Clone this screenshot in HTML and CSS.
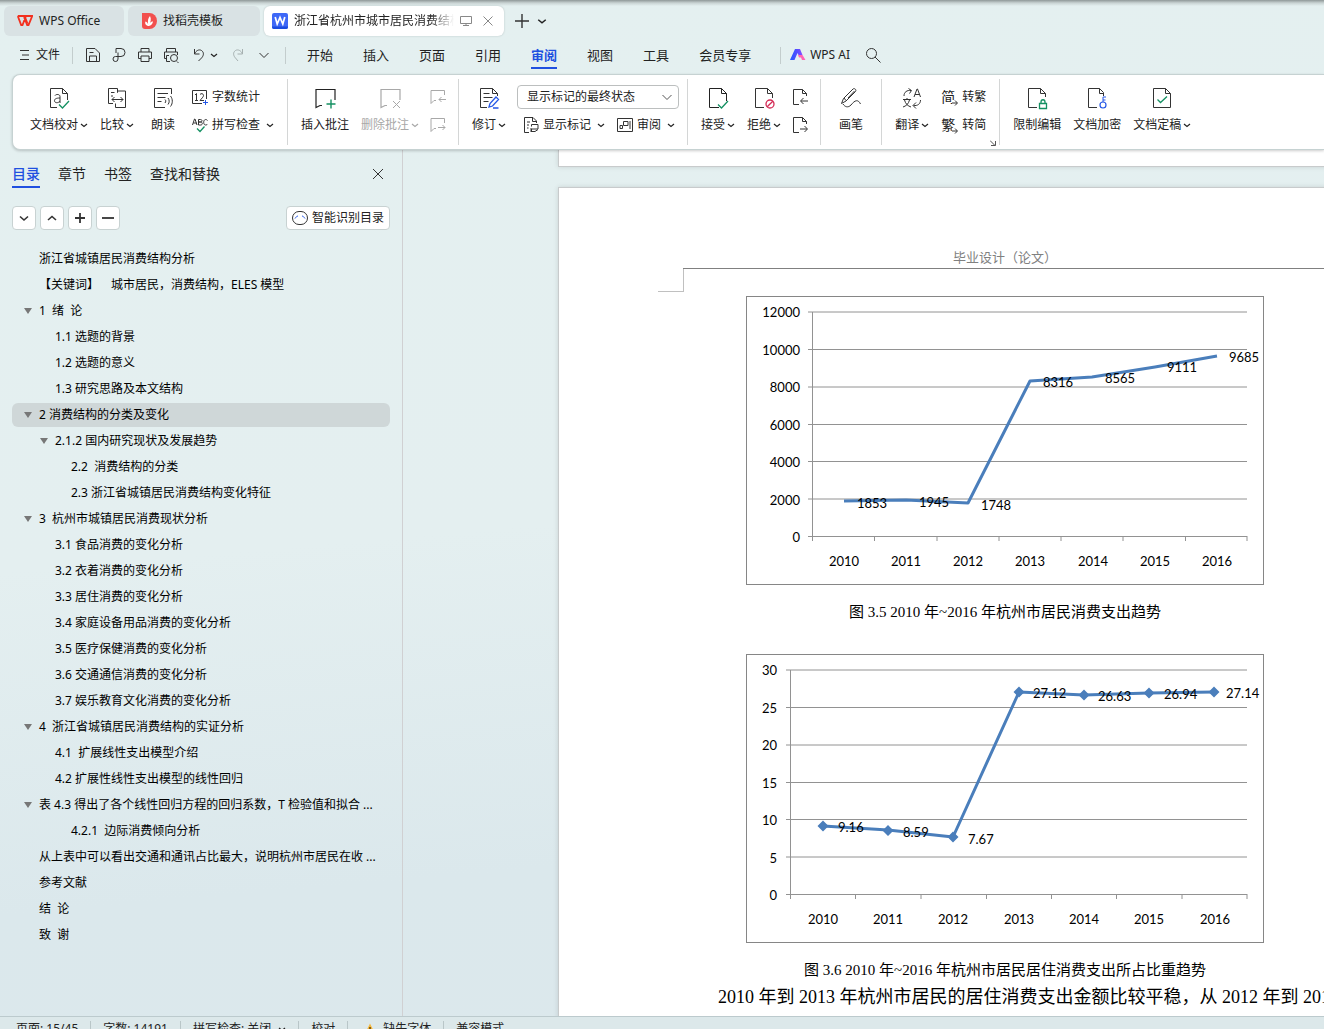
FILE: index.html
```
<!doctype html>
<html lang="zh-CN">
<head>
	<meta charset="UTF-8">
	<title>WPS Office</title>
	<meta name="viewport" content="width=device-width, initial-scale=1.0">
	<link rel="stylesheet" href="styles.css">
</head>
<body>
	<svg class="defs" width="0" height="0">
		<symbol id="down" viewBox="0 0 8 8"><path d="M1 3L4 5.500 7 3" fill="none" stroke="currentColor" stroke-width="1.200"/></symbol>
		<symbol id="doc" viewBox="0 0 24 24"><path d="M13 21.500H3.500v-19h12l5 5V15M15.500 2.500v5h5" fill="none" stroke="currentColor"/></symbol>
		<symbol id="note" viewBox="0 0 24 24"><path d="M9 19.500H7l-4 2V3.500h19V14" fill="none" stroke="currentColor" stroke-width="1.200"/></symbol>
	</svg>

	<header class="tabs">
		<button class="tab">
			<svg width="16" height="16" viewBox="0 0 16 16"><path d="M.8 3h6.700l3 7.500M.8 3l3.400 9h1.300L9 3h6.200l-3.700 9h-1.300L7 4" fill="none" stroke="#f2301f" stroke-width="1.800"/></svg>
			<span>WPS Office</span>
		</button>
		<button class="tab tab-tpl">
			<svg width="16" height="16" viewBox="0 0 16 16"><path d="M1 0h7.500a7.500 8 0 0 1 0 16H4a3 3 0 0 1-3-3z" fill="#f2504e"/><path d="M7 13c-3-1-3-3-2.600-4.500C6 9 7 10 7.200 12 6.500 8 7 5 9 3c1.500 3 .8 6-1 9 .6-2 1.800-3.500 3.800-3.800.3 2.600-1.800 4.600-4.800 4.800z" fill="#fff"/></svg>
			<span>找稻壳模板</span>
		</button>
		<button class="tab tab-on">
			<svg width="16" height="16" viewBox="0 0 16 16"><rect width="16" height="16" rx="2" fill="#3e68f7"/><path d="M0 13.500h16V14a2 2 0 0 1-2 2H2a2 2 0 0 1-2-2z" fill="#1a4be0"/><path d="M3.200 4l2 7L8 4.500l2.800 6.500 2-7" fill="none" stroke="#fff" stroke-width="1.700"/></svg>
			<span class="tab-name">浙江省杭州市城市居民消费结构</span>
			<svg width="12" height="12" viewBox="0 0 12 12"><path d="M.5 1.500h11v7H.5zM3 10.500h6M6 8.500v2" fill="none" stroke="#888"/></svg>
			<svg class="tab-x" width="12" height="12" viewBox="0 0 12 12"><path d="M1.500 1.500l9 9m0-9l-9 9" stroke="#888"/></svg>
		</button>
		<button class="plain add" aria-label="新建"><svg width="14" height="14" viewBox="0 0 14 14"><path d="M7 0v14M0 7h14" stroke="#333" stroke-width="1.400"/></svg></button>
		<button class="plain" aria-label="更多"><svg width="10" height="10"><use href="#down"/></svg></button>
	</header>

	<nav class="menu">
		<button class="plain file">
			<svg width="10" height="12" viewBox="0 0 10 12"><path d="M0 1.500h9M2 6h7M0 10.500h9" stroke="#333"/></svg>
			<span>文件</span>
		</button>
		<i class="line"></i>
		<div class="quick">
			<button class="plain" aria-label="保存"><svg width="16" height="16" viewBox="0 0 16 16"><path d="M1.500 14.500v-13h8.500l4.500 4.500v8.500zM4.500 14.500V9h7v5.500M4.500 5.500h4" fill="none" stroke="#333"/></svg></button>
			<button class="plain" aria-label="输出"><svg width="16" height="16" viewBox="0 0 16 16"><path d="M5 6V1.500h5a4 4 0 0 1 0 8H4.500a2.500 2.500 0 1 0 2.500 2.500V5.500" fill="none" stroke="#333"/></svg></button>
			<button class="plain" aria-label="打印"><svg width="16" height="16" viewBox="0 0 16 16"><path d="M4 5V1.500h8V5M4 11.500H1.500V5h13v6.500H12M4 9h8v5.500H4z" fill="none" stroke="#333"/></svg></button>
			<button class="plain" aria-label="打印预览"><svg width="16" height="16" viewBox="0 0 16 16"><path d="M3.500 5V1.500h9V5M3.500 11.500h-2V5h13v3M6 8.500H3.500v6H7M14 14.500l1.500 1.500" fill="none" stroke="#333"/><circle cx="11" cy="11" r="3.500" fill="none" stroke="#333"/></svg></button>
			<button class="plain undo" aria-label="撤销"><svg width="14" height="16" viewBox="0 0 14 16"><path d="M2.500 2v5h5M2.500 7C4 3.500 7 2 9.500 3.500c3 2 2 5.500 0 7.500L6.500 14" fill="none" stroke="#333"/></svg><svg width="8" height="8"><use href="#down"/></svg></button>
			<button class="plain redo" aria-label="恢复" disabled><svg width="14" height="16" viewBox="0 0 14 16"><path d="M11.500 2v5h-5M11.500 7C10 3.500 7 2 4.500 3.500c-3 2-2 5.500 0 7.500L7 14" fill="none" stroke="#a6b0b0"/></svg></button>
			<button class="plain" aria-label="自定义"><svg width="12" height="12" viewBox="0 0 12 12"><path d="M1.500 4L6 8.500 10.500 4" fill="none" stroke="#333"/></svg></button>
		</div>
		<i class="line"></i>
		<div class="pages">
			<button class="plain">开始</button>
			<button class="plain">插入</button>
			<button class="plain">页面</button>
			<button class="plain">引用</button>
			<button class="plain on">审阅</button>
			<button class="plain">视图</button>
			<button class="plain">工具</button>
			<button class="plain">会员专享</button>
		</div>
		<i class="line"></i>
		<button class="plain ai">
			<svg width="16" height="14" viewBox="0 0 16 14"><defs><linearGradient id="g"><stop offset="0" stop-color="#1f5bff"/><stop offset=".6" stop-color="#5a4dff"/><stop offset="1" stop-color="#8a4dff"/></linearGradient></defs><path d="M5 1h5l2.500 6H8.500L7.500 5 4.500 12H0z" fill="url(#g)"/><path d="M8 7h4.500L15.500 12H12L11 9.500H9z" fill="#ff63b5"/></svg>
			<span>WPS AI</span>
		</button>
		<button class="plain search" aria-label="搜索"><svg width="16" height="16" viewBox="0 0 16 16"><circle cx="6.500" cy="6.500" r="5" fill="none" stroke="#333"/><path d="M10 10l5.500 5.500" stroke="#333"/></svg></button>
	</nav>

	<section class="ribbon">
		<div class="group">
			<button class="big">
				<svg width="24" height="24" viewBox="0 0 24 24"><path d="M10 21.500H3.500v-19h12l5 5V14M15.500 2.500v5h5" fill="none" stroke="#333"/><path d="M8 9.500c1-1.500 5-1.500 5 1V17M13 12c-4 0-5.500 1-5.500 2.700 0 2.600 4 2.600 5.500.3" fill="none" stroke="#333"/><path d="M12 18.500l3.500 3.500L22 15" fill="none" stroke="#149062" stroke-width="1.300"/></svg>
				<span>文档校对<svg width="8" height="8"><use href="#down"/></svg></span>
			</button>
			<button class="big">
				<svg width="24" height="24" viewBox="0 0 24 24"><path d="M8 17.500H3.500v-15h9v4M12.500 6.500V5h8v16.500h-10v-4M6 6.500h3.500M6 10h2M7 13.500h11M9.500 11L7 13.500 9.500 16M15.500 11l2.500 2.500-2.500 2.500" fill="none" stroke="#333"/></svg>
				<span>比较<svg width="8" height="8"><use href="#down"/></svg></span>
			</button>
			<button class="big">
				<svg width="24" height="24" viewBox="0 0 24 24"><path d="M14 21.500H3.500v-19h17V8M6.500 7.500H17M6.500 11.500h8M6.500 15.500h4M14 13.500c1 1 1 2 0 3.500M17 12c1.600 2 1.600 4.500 0 6.500M19.500 10c2.400 3 2.400 7.500 0 10.500" fill="none" stroke="#333"/></svg>
				<span>朗读</span>
			</button>
			<div class="stack">
				<button class="small">
					<svg width="16" height="16" viewBox="0 0 16 16"><path d="M10 14.500H.5v-13h14V10M3 6l1.500-1.500v7M3 11.500h3M8 5.500c1-1.500 3.500-1 3.500 1 0 1.500-2 3-3.500 5h4" fill="none" stroke="#333"/><path d="M13.500 11v5M11 13.500h5" stroke="#2457e6"/></svg>
					<span>字数统计</span>
				</button>
				<button class="small">
					<svg width="16" height="16" viewBox="0 0 16 16"><path d="M.5 8l2-6h.5l2 6M1.500 6h3M6.500 8V2.500h2c2 0 2 2.500 0 2.500h-2 2.300c2 0 2 3 0 3zM15.500 3.500c-1-1.500-3.800-1.500-3.800 1.800s2.800 3.200 3.800 1.700" fill="none" stroke="#333"/><path d="M5 11.500l3 3 4.500-5" fill="none" stroke="#149062" stroke-width="1.300"/></svg>
					<span>拼写检查</span><svg class="dn" width="8" height="8"><use href="#down"/></svg>
				</button>
			</div>
		</div>
		<div class="group">
			<button class="big">
				<svg width="24" height="24" viewBox="0 0 24 24"><use href="#note"/><path d="M18 13.500v9M13.500 18h9" stroke="#149062" stroke-width="1.400"/></svg>
				<span>插入批注</span>
			</button>
			<button class="big off" disabled>
				<svg width="24" height="24" viewBox="0 0 24 24"><use href="#note"/><path d="M15 15l7 7m0-7l-7 7" stroke="currentColor"/></svg>
				<span>删除批注<svg width="8" height="8"><use href="#down"/></svg></span>
			</button>
			<div class="stack stack-icons">
				<button class="small off" aria-label="上一条" disabled><svg width="16" height="16" viewBox="0 0 16 16"><path d="M6 11.500H4l-3 3V1.500h13.500V6M16 10.500H9M11.500 8L9 10.500l2.500 2.500" fill="none" stroke="currentColor"/></svg></button>
				<button class="small off" aria-label="下一条" disabled><svg width="16" height="16" viewBox="0 0 16 16"><path d="M6 11.500H4l-3 3V1.500h13.500V6M8 10.500h7M12.500 8l2.500 2.500-2.500 2.500" fill="none" stroke="currentColor"/></svg></button>
			</div>
		</div>
		<div class="group group-mark">
			<button class="big">
				<svg width="24" height="24" viewBox="0 0 24 24"><path d="M10 21.500H3.500v-19h12l5 5V10M15.500 2.500v5h5M6.500 7.500h6M6.500 11.500h9M6.500 15.500h5" fill="none" stroke="#333"/><path d="M12 21l1-3.500 6-6.500 2.500 2.500-6 6.500zM16 22h5.500" fill="none" stroke="#2457e6" stroke-width="1.300"/></svg>
				<span>修订<svg width="8" height="8"><use href="#down"/></svg></span>
			</button>
			<div class="stack stack-mark">
				<div class="pick">
					<select aria-label="显示状态"><option>显示标记的最终状态</option></select>
					<svg width="12" height="12" viewBox="0 0 12 12"><path d="M1.500 4L6 8.500 10.500 4" fill="none" stroke="#555"/></svg>
				</div>
				<div class="pair">
					<button class="small">
						<svg width="16" height="16" viewBox="0 0 16 16"><path d="M6 15.500H1.500V.5H10L13.500 4v2M9.500.5V4.500h4M4 5h3M4 8h2M4 11h1.500M8.500 9.500V7.500h6.500v4.500h-6.500v2M8 15v-4M8 14.500h4l3-2" fill="none" stroke="#333"/></svg>
						<span>显示标记</span><svg class="dn" width="8" height="8"><use href="#down"/></svg>
					</button>
					<button class="small">
						<svg width="16" height="16" viewBox="0 0 16 16"><path d="M.5 1.500h15v13H.5zM6.500 4.500H11v4H6.500zM3 8.500h2.500v3H3zM13 4v8" fill="none" stroke="#333"/></svg>
						<span>审阅</span><svg class="dn" width="8" height="8"><use href="#down"/></svg>
					</button>
				</div>
			</div>
		</div>
		<div class="group">
			<button class="big">
				<svg width="24" height="24" viewBox="0 0 24 24"><use href="#doc"/><path d="M12 18.500l3.500 3.500L22 15" fill="none" stroke="#149062" stroke-width="1.300"/></svg>
				<span>接受<svg width="8" height="8"><use href="#down"/></svg></span>
			</button>
			<button class="big">
				<svg width="24" height="24" viewBox="0 0 24 24"><path d="M12 21.500H3.500v-19h12l5 5V12M15.500 2.500v5h5" fill="none" stroke="#333"/><circle cx="18" cy="18" r="4" fill="none" stroke="#d42a55" stroke-width="1.300"/><path d="M15.200 20.800l5.600-5.600" stroke="#d42a55" stroke-width="1.300"/></svg>
				<span>拒绝<svg width="8" height="8"><use href="#down"/></svg></span>
			</button>
			<div class="stack stack-icons">
				<button class="small" aria-label="上一条修订"><svg width="16" height="16" viewBox="0 0 16 16"><path d="M7 15.500H1.500V.5h9l4 4V7M10.500.5v4h4M16 12H9M11.500 9L8.500 12l3 3" fill="none" stroke="#333"/></svg></button>
				<button class="small" aria-label="下一条修订"><svg width="16" height="16" viewBox="0 0 16 16"><path d="M7 15.500H1.500V.5h9l4 4V7M10.500.5v4h4M8 12h7M12.500 9l3 3-3 3" fill="none" stroke="#333"/></svg></button>
			</div>
		</div>
		<div class="group">
			<button class="big">
				<svg width="24" height="24" viewBox="0 0 24 24"><path d="M2.500 17.500l2-5L14 3c1.500-1.200 3.800.8 2.500 2.500L7 15zM5 12l2 2.500M15.500 5L9 12M4 18c2 3 5 4 8 1 4-5 7-6 9.500-1" fill="none" stroke="#333"/></svg>
				<span>画笔</span>
			</button>
		</div>
		<div class="group group-trans">
			<button class="big">
				<svg width="24" height="24" viewBox="0 0 24 24"><path d="M4 10c0-4 3-6 7-5.500M8.500 2.500l3 2-2 3M20.500 14c0 4-3 6-7 5.500M16 16.500l-3 3 3 3M14 11l3-8h.5l3 8M15 8.500h4.500M3 13.500h8M7 12v1.500M9.500 14c-1 4-3.500 6-6.500 7M4.500 14c1 4 3.500 6 6.500 7" fill="none" stroke="#333"/></svg>
				<span>翻译<svg width="8" height="8"><use href="#down"/></svg></span>
			</button>
			<div class="stack">
				<button class="small"><span class="zi">简<svg width="6" height="6" viewBox="0 0 6 6"><path d="M0 3h5M3 .5L5.500 3 3 5.500" fill="none" stroke="#333"/></svg></span><span>转繁</span></button>
				<button class="small"><span class="zi">繁<svg width="6" height="6" viewBox="0 0 6 6"><path d="M0 3h5M3 .5L5.500 3 3 5.500" fill="none" stroke="#333"/></svg></span><span>转简</span></button>
			</div>
			<svg class="launch" width="6" height="6" viewBox="0 0 6 6"><path d="M0 .5l5 5M5.500 1v4.500H1" fill="none" stroke="#555"/></svg>
		</div>
		<div class="group">
			<button class="big">
				<svg width="24" height="24" viewBox="0 0 24 24"><path d="M12 21.500H3.500v-19h12l5 5V11M15.500 2.500v5h5" fill="none" stroke="#333"/><path d="M14.500 17.500h7v5h-7zM16 17.500v-1.500c0-3 4-3 4 0v1.500" fill="none" stroke="#149062" stroke-width="1.300"/></svg>
				<span>限制编辑</span>
			</button>
			<button class="big">
				<svg width="24" height="24" viewBox="0 0 24 24"><path d="M12 21.500H3.500v-19h11l4 4V10M14.500 2.500v5h4" fill="none" stroke="#333"/><path d="M18 16v-5h3M18 14h2.500" fill="none" stroke="#2457e6"/><circle cx="18" cy="19" r="3" fill="none" stroke="#2457e6" stroke-width="1.200"/></svg>
				<span>文档加密</span>
			</button>
			<button class="big">
				<svg width="24" height="24" viewBox="0 0 24 24"><path d="M3.500 2.500h12l5 5v14h-17zM15.500 2.500v5h5" fill="none" stroke="#333"/><path d="M7.500 13.500l3 3 6.500-6" fill="none" stroke="#149062" stroke-width="1.300"/></svg>
				<span>文档定稿<svg width="8" height="8"><use href="#down"/></svg></span>
			</button>
		</div>
	</section>

	<main>
		<aside class="side">
			<div class="side-tabs">
				<button class="plain on">目录</button>
				<button class="plain">章节</button>
				<button class="plain">书签</button>
				<button class="plain">查找和替换</button>
				<button class="plain close" aria-label="关闭"><svg width="12" height="12" viewBox="0 0 12 12"><path d="M1 1l10 10m0-10L1 11" stroke="#333"/></svg></button>
			</div>
			<div class="side-tools">
				<button aria-label="展开"><svg width="12" height="12" viewBox="0 0 12 12"><path d="M2 4.500L6 8l4-3.500" fill="none" stroke="#333" stroke-width="1.600"/></svg></button>
				<button aria-label="收起"><svg width="12" height="12" viewBox="0 0 12 12"><path d="M2 8l4-3.500L10 8" fill="none" stroke="#333" stroke-width="1.600"/></svg></button>
				<button aria-label="放大"><svg width="12" height="12" viewBox="0 0 12 12"><path d="M6 1v10M1 6h10" stroke="#333" stroke-width="1.800"/></svg></button>
				<button aria-label="缩小"><svg width="12" height="12" viewBox="0 0 12 12"><path d="M0 6h12" stroke="#333" stroke-width="1.800"/></svg></button>
				<button class="smart">
					<svg width="16" height="16" viewBox="0 0 16 16"><rect x=".5" y="1.500" width="15" height="13" rx="6.500" fill="#fff" stroke="#333"/><path d="M3 8.500c1-1.500 1.800-2.300 3-2.500M13 8.500c-1-1.500-1.800-2.300-3-2.500" fill="none" stroke="#2457e6"/></svg>
					<span>智能识别目录</span>
				</button>
			</div>
			<ul class="toc">
				<li><a href="#">浙江省城镇居民消费结构分析</a></li>
				<li><a href="#">【关键词】　城市居民，消费结构，ELES 模型</a></li>
				<li class="open"><a href="#">1  绪  论</a></li>
				<li class="lv2"><a href="#">1.1 选题的背景</a></li>
				<li class="lv2"><a href="#">1.2 选题的意义</a></li>
				<li class="lv2"><a href="#">1.3 研究思路及本文结构</a></li>
				<li class="open cur"><a href="#">2 消费结构的分类及变化</a></li>
				<li class="lv2 open"><a href="#">2.1.2 国内研究现状及发展趋势</a></li>
				<li class="lv3"><a href="#">2.2  消费结构的分类</a></li>
				<li class="lv3"><a href="#">2.3 浙江省城镇居民消费结构变化特征</a></li>
				<li class="open"><a href="#">3  杭州市城镇居民消费现状分析</a></li>
				<li class="lv2"><a href="#">3.1 食品消费的变化分析</a></li>
				<li class="lv2"><a href="#">3.2 衣着消费的变化分析</a></li>
				<li class="lv2"><a href="#">3.3 居住消费的变化分析</a></li>
				<li class="lv2"><a href="#">3.4 家庭设备用品消费的变化分析</a></li>
				<li class="lv2"><a href="#">3.5 医疗保健消费的变化分析</a></li>
				<li class="lv2"><a href="#">3.6 交通通信消费的变化分析</a></li>
				<li class="lv2"><a href="#">3.7 娱乐教育文化消费的变化分析</a></li>
				<li class="open"><a href="#">4  浙江省城镇居民消费结构的实证分析</a></li>
				<li class="lv2"><a href="#">4.1  扩展线性支出模型介绍</a></li>
				<li class="lv2"><a href="#">4.2 扩展性线性支出模型的线性回归</a></li>
				<li class="open"><a href="#">表 4.3 得出了各个线性回归方程的回归系数，T 检验值和拟合 ...</a></li>
				<li class="lv3"><a href="#">4.2.1  边际消费倾向分析</a></li>
				<li><a href="#">从上表中可以看出交通和通讯占比最大，说明杭州市居民在收 ...</a></li>
				<li><a href="#">参考文献</a></li>
				<li><a href="#">结  论</a></li>
				<li><a href="#">致  谢</a></li>
			</ul>
		</aside>

		<div class="view">
			<div class="paper paper-prev"></div>
			<article class="paper">
				<p class="running">毕业设计（论文）</p>
				<div class="corner"></div>
				<figure>
					<svg class="chart" width="518" height="289" viewBox="0 0 518 289">
						<rect x=".5" y=".5" width="517" height="288" fill="#fff" stroke="#868686"/>
						<path class="grid" d="M62 16h439M62 53.500h439M62 91h439M62 128.500h439M62 165.500h439M62 203h439M62 240.500h439M66.500 16v229M128.500 240v5M191 240v5M253 240v5M315 240v5M377 240v5M439.500 240v5M501 240v5"/>
						<polyline class="data" points="98,205 160,204 222,207 284,85 346,81 409,71 471,60"/>
						<g text-anchor="end">
							<text x="54" y="21">12000</text><text x="54" y="59">10000</text><text x="54" y="96">8000</text><text x="54" y="134">6000</text><text x="54" y="171">4000</text><text x="54" y="209">2000</text><text x="54" y="246">0</text>
						</g>
						<g text-anchor="middle">
							<text x="98" y="270">2010</text><text x="160" y="270">2011</text><text x="222" y="270">2012</text><text x="284" y="270">2013</text><text x="347" y="270">2014</text><text x="409" y="270">2015</text><text x="471" y="270">2016</text>
						</g>
						<text x="111" y="212">1853</text><text x="173" y="211">1945</text><text x="235" y="214">1748</text><text x="297" y="91">8316</text><text x="359" y="87">8565</text><text x="421" y="76">9111</text><text x="483" y="66">9685</text>
					</svg>
					<figcaption>图 3.5 2010 年~2016 年杭州市居民消费支出趋势</figcaption>
				</figure>
				<figure>
					<svg class="chart" width="518" height="289" viewBox="0 0 518 289">
						<rect x=".5" y=".5" width="517" height="288" fill="#fff" stroke="#868686"/>
						<path class="grid" d="M40 16h461M40 53.500h461M40 91h461M40 128.500h461M40 165.500h461M40 203h461M40 240.500h461M44.500 16v229M109.500 240v5M175 240v5M240.500 240v5M305.500 240v5M370.500 240v5M436 240v5M501 240v5"/>
						<polyline class="data" points="77,172 142,176 207,183 273,38 338,41 403,39 468,38"/>
						<path d="M77 166.500l5.500 5.500-5.500 5.500-5.500-5.500zM142 171l5.500 5.500-5.500 5.500-5.500-5.500zM207 177.500l5.500 5.500-5.500 5.500-5.500-5.500zM273 32.500l5.500 5.500-5.500 5.500-5.500-5.500zM338 35.500l5.500 5.500-5.500 5.500-5.500-5.500zM403 33.500l5.500 5.500-5.500 5.500-5.500-5.500zM468 32.500l5.500 5.500-5.500 5.500-5.500-5.500z" fill="#4a7ebb"/>
						<g text-anchor="end">
							<text x="31" y="21">30</text><text x="31" y="59">25</text><text x="31" y="96">20</text><text x="31" y="134">15</text><text x="31" y="171">10</text><text x="31" y="209">5</text><text x="31" y="246">0</text>
						</g>
						<g text-anchor="middle">
							<text x="77" y="270">2010</text><text x="142" y="270">2011</text><text x="207" y="270">2012</text><text x="273" y="270">2013</text><text x="338" y="270">2014</text><text x="403" y="270">2015</text><text x="469" y="270">2016</text>
						</g>
						<text x="92" y="178">9.16</text><text x="157" y="183">8.59</text><text x="222" y="190">7.67</text><text x="287" y="44">27.12</text><text x="352" y="47">26.63</text><text x="418" y="45">26.94</text><text x="480" y="44">27.14</text>
					</svg>
					<figcaption>图 3.6 2010 年~2016 年杭州市居民居住消费支出所占比重趋势</figcaption>
				</figure>
				<p class="text">2010 年到 2013 年杭州市居民的居住消费支出金额比较平稳，从 2012 年到 2013</p>
			</article>
		</div>
	</main>

	<footer class="status">
		<span>页面: 15/45</span>
		<span>字数: 14191</span>
		<span>拼写检查: 关闭 <svg width="8" height="8"><use href="#down"/></svg></span>
		<span>校对</span>
		<span class="font-warn"><svg width="12" height="12" viewBox="0 0 12 12"><path d="M6 .5l5.500 11H.5z" fill="#f5b83d"/><path d="M6 4v4M6 9v1.500" stroke="#5b3a00" stroke-width="1.400"/></svg>缺失字体</span>
		<span>兼容模式</span>
	</footer>
</body>
</html>
```

FILE: styles.css
```
*{
	box-sizing: border-box;
}
html{
	height: 100%;
	overflow: hidden;
}
/* the status bar runs a little below the window */
body{
	margin: 0;
	height: calc(100vh + 9px);
	display: flex;
	flex-direction: column;
	overflow: hidden;
	color: #222;
	font: 12px/18px "Noto Sans", "Noto Sans CJK SC", sans-serif;
	text-spacing-trim: space-all;
	background: linear-gradient(175deg, #e4f0f0 0%, #e4eff0 50%, #dbe8ec 80%, #dce8ec 100%);
}
button, select{
	margin: 0;
	padding: 0;
	border: 0;
	color: inherit;
	font: inherit;
	background: none;
	white-space: nowrap;
}
ul, p, figure{
	margin: 0;
	padding: 0;
	list-style: none;
}
a{
	color: inherit;
	text-decoration: none;
}
svg{
	flex: none;
}
.defs{
	position: absolute;
}
.plain{
	display: flex;
	align-items: center;
}

/* document tabs */
.tabs{
	display: flex;
	align-items: center;
	gap: 4px;
	height: 40px;
	padding: 2px 4px 0;
	background: linear-gradient(#8f9898, #c9d3d3 3px, rgba(228,240,240,0) 6px);
}
.tab{
	display: flex;
	align-items: center;
	gap: 6px;
	width: 120px;
	height: 30px;
	padding: 0 13px;
	border-radius: 6px;
	background: #d9e2e4;
}
.tab-tpl{
	width: 132px;
}
.tab-on{
	width: 240px;
	padding: 0 10px 0 8px;
	background: #fff;
	box-shadow: 0 0 2px #b4c0c0;
}
.tab-name{
	flex: 1;
	overflow: hidden;
	-webkit-mask-image: linear-gradient(90deg, #000 85%, transparent);
	mask-image: linear-gradient(90deg, #000 85%, transparent);
}
.tab-x{
	margin-left: 4px;
}
.add{
	margin: 0 4px 0 7px;
}

/* menu bar */
.menu{
	display: flex;
	align-items: center;
	height: 34px;
	padding: 0 20px 4px;
}
.file{
	gap: 6px;
}
.line{
	width: 1px;
	height: 17px;
	margin: 0 12px;
	background: #c3cdcd;
}
.quick{
	display: flex;
	align-items: center;
	gap: 10px;
	margin-right: 3px;
}
.undo{
	gap: 4px;
	margin-left: 3px;
}
.redo{
	margin: 0 3px;
}
.pages{
	display: flex;
	gap: 30px;
	margin: 0 17px 0 9px;
	font-size: 13px;
}
.pages .plain{
	height: 28px;
	padding-top: 2px;
	border-bottom: 2px solid transparent;
}
.pages .on{
	color: #2050e0;
	font-weight: bold;
	border-color: #2050e0;
}
.ai{
	gap: 4px;
	margin-left: -3px;
}
.search{
	margin-left: 15px;
}

/* ribbon */
.ribbon{
	position: relative;
	display: flex;
	align-items: center;
	height: 76px;
	margin-left: 12px;
	padding-left: 4px;
	border: 1px solid #c6d2d2;
	border-right: 0;
	border-radius: 8px 0 0 8px;
	background: #fff;
	box-shadow: 0 1px 3px rgba(0,0,0,.2);
}
.group{
	display: flex;
	gap: 12px;
	height: 66px;
	padding: 7px 13px 0;
	border-right: 1px solid #d4d6d6;
}
.group:last-child{
	border: 0;
}
.group-mark{
	padding-right: 8px;
}
.big{
	display: flex;
	flex-direction: column;
	align-items: center;
	justify-content: flex-start;
	gap: 6px;
	min-width: 34px;
	height: 50px;
}
.big span{
	display: flex;
	align-items: center;
	gap: 2px;
}
.stack{
	display: flex;
	flex-direction: column;
	gap: 8px;
	padding-top: 1px;
}
.stack-mark{
	gap: 6px;
	padding: 0;
	margin-left: -1px;
}
.stack-icons{
	width: 14px;
}
.small{
	display: flex;
	align-items: center;
	gap: 4px;
	height: 20px;
}
.stack-icons .small{
	justify-content: center;
}
.small .dn{
	margin-left: 2px;
}
.off{
	color: #a8a8a8;
}
.pick{
	position: relative;
	width: 162px;
	margin-top: -1px;
}
.pick select{
	width: 100%;
	height: 24px;
	padding: 0 9px;
	border: 1px solid #bcbfbf;
	border-radius: 4px;
	appearance: none;
	background: #fff;
}
.pick svg{
	position: absolute;
	top: 6px;
	right: 6px;
	pointer-events: none;
}
.pair{
	display: flex;
	gap: 12px;
	padding-left: 6px;
}
.group-trans{
	position: relative;
}
.zi{
	position: relative;
	width: 17px;
	text-align: left;
	font-size: 14px;
}
.zi svg{
	position: absolute;
	right: 0;
	bottom: 0;
	background: #fff;
}
.launch{
	position: absolute;
	right: 3px;
	bottom: -1px;
}

/* outline pane */
main{
	flex: 1;
	min-height: 0;
	display: flex;
}
.side{
	flex: none;
	width: 403px;
	padding: 11px 12px 0;
	border-right: 1px solid #d0d0d2;
}
.side-tabs{
	display: flex;
	align-items: center;
	gap: 18px;
	font-size: 14px;
}
.side-tabs .plain{
	height: 27px;
	border-bottom: 2px solid transparent;
}
.side-tabs .on{
	color: #2050e0;
	font-weight: 500;
	border-color: #2050e0;
}
.side-tabs .close{
	margin: 0 6px 0 auto;
}
.side-tools{
	display: flex;
	gap: 4px;
	margin: 18px 0 17px;
}
.side-tools button{
	display: flex;
	align-items: center;
	justify-content: center;
	gap: 4px;
	width: 24px;
	height: 24px;
	border: 1px solid #c8d2d2;
	border-radius: 4px;
	background: #fff;
}
.side-tools .smart{
	width: auto;
	margin-left: auto;
	padding: 0 5px;
}
.toc{
	color: #000;
}
.toc a{
	display: flex;
	align-items: center;
	gap: 7px;
	height: 24px;
	margin-bottom: 2px;
	padding-left: 12px;
	border-radius: 6px;
	white-space: pre;
}
.toc a::before{
	content: "";
	border: 4px solid transparent;
	border-top: 6px solid transparent;
	border-bottom: 0;
}
.toc .open a::before{
	border-top-color: #777;
}
.toc .lv2 a{
	padding-left: 28px;
}
.toc .lv3 a{
	padding-left: 44px;
}
.toc .cur a{
	background: #cfd7d8;
}

/* document */
.view{
	flex: 1;
	min-width: 0;
	padding-left: 155px;
	overflow: hidden;
}
.paper{
	width: 894px;
	padding: 60px 124px 0;
	border: 1px solid #c8cbcc;
	background: #fff;
	box-shadow: 0 0 5px rgba(0,0,0,.12);
	color: #000;
	font-family: "Liberation Serif", "Noto Sans CJK SC", serif;
}
.paper + .paper{
	margin-top: 20px;
	height: 1200px;
}
.paper-prev{
	height: 17px;
	padding: 0;
	border-top: 0;
}
.running{
	border-bottom: 1px solid #808080;
	color: #808080;
	font-size: 13px;
	line-height: 20px;
	text-align: center;
}
.corner{
	width: 26px;
	height: 23px;
	margin: 0 0 4px -25px;
	border: solid #c0c0c0;
	border-width: 0 1px 1px 0;
}
figure{
	text-align: center;
	font-size: 15px;
	line-height: 20px;
}
figure + figure{
	margin-top: 32px;
}
.chart{
	display: block;
	margin: 0 auto 17px;
}
.chart text{
	font: 13px Lato, sans-serif;
}
.grid{
	fill: none;
	stroke: #929292;
}
.data{
	fill: none;
	stroke: #4a7ebb;
	stroke-width: 3;
	stroke-linejoin: round;
}
.text{
	margin-top: 4px;
	padding-left: 35px;
	font-size: 18px;
	line-height: 26px;
	white-space: nowrap;
}

/* status bar */
.status{
	flex: none;
	display: flex;
	height: 22px;
	padding: 4px 4px 0;
	border-top: 1px solid #bccacd;
	background: #dce8ea;
}
.status span{
	display: flex;
	align-items: center;
	gap: 7px;
	height: 16px;
	padding: 0 12px;
	border-right: 1px solid #b9c6c8;
}
.status .font-warn{
	padding-left: 16px;
}
.status span:last-child{
	border: 0;
}
```
